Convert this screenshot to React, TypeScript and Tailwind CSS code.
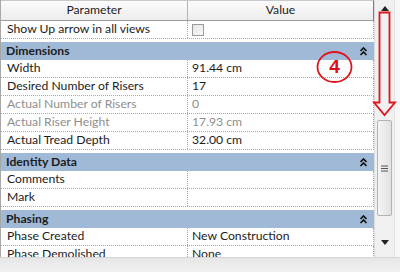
import React from "react";

type Row =
  | { kind: "row"; p: string; v?: string; dim?: boolean; check?: boolean }
  | { kind: "group"; label: string };

const rows: Row[] = [
  { kind: "row", p: "Show Up arrow in all views", check: true },
  { kind: "group", label: "Dimensions" },
  { kind: "row", p: "Width", v: "91.44 cm" },
  { kind: "row", p: "Desired Number of Risers", v: "17" },
  { kind: "row", p: "Actual Number of Risers", v: "0", dim: true },
  { kind: "row", p: "Actual Riser Height", v: "17.93 cm", dim: true },
  { kind: "row", p: "Actual Tread Depth", v: "32.00 cm" },
  { kind: "group", label: "Identity Data" },
  { kind: "row", p: "Comments", v: "" },
  { kind: "row", p: "Mark", v: "" },
  { kind: "group", label: "Phasing" },
  { kind: "row", p: "Phase Created", v: "New Construction" },
  { kind: "row", p: "Phase Demolished", v: "None" },
];

function Chevrons() {
  return (
    <svg width="9" height="9" viewBox="0 0 9 9" className="mr-[6px]">
      <path d="M1.5 4 L4.5 1 L7.5 4" fill="none" stroke="#111" strokeWidth="1.7" />
      <path d="M1.5 8 L4.5 5 L7.5 8" fill="none" stroke="#111" strokeWidth="1.7" />
    </svg>
  );
}

export default function App() {
  return (
    <div
      className="relative w-[400px] h-[272px] overflow-hidden bg-white text-[12.2px] text-[#1c1c1c]"
      style={{ fontFamily: 'Lato, "Noto Sans", sans-serif' }}
    >
      <div className="flex h-[257px]">
        <div className="w-[374px] h-full overflow-hidden border-l border-[#a8a8a8] flex flex-col">
          <div className="flex h-[21px] shrink-0 bg-gradient-to-b from-[#fbfbfb] to-[#ededed] border-b border-[#9c9c9c] border-r border-r-[#7a7a7a] border-t border-t-[#c8c8c8]">
            <div className="w-[187px] flex items-center justify-center border-r border-[#b4b4b4]">
              Parameter
            </div>
            <div className="flex-1 flex items-center justify-center">Value</div>
          </div>
          {rows.map((r, i) =>
            r.kind === "group" ? (
              <div
                key={i}
                className="mt-[3px] h-[18px] shrink-0 bg-[#9fb9d7] flex items-center justify-between pl-[5px] font-bold"
              >
                <span>{r.label}</span>
                <Chevrons />
              </div>
            ) : (
              <div
                key={i}
                className="h-[18px] shrink-0 flex border-b border-dotted border-[#a9a9a9] border-r"
              >
                <div
                  className={`w-[187px] pl-[6px] flex items-center border-r border-dotted border-[#a9a9a9] whitespace-nowrap ${
                    r.dim ? "text-[#8e8e8e]" : ""
                  }`}
                >
                  {r.p}
                </div>
                <div
                  className={`flex-1 pl-[4px] flex items-center whitespace-nowrap ${
                    r.dim ? "text-[#8e8e8e]" : ""
                  }`}
                >
                  {r.check ? (
                    <div className="w-[12px] h-[12px] border border-[#9a9a9a] bg-gradient-to-br from-[#e4e4e4] to-[#fafafa]" />
                  ) : (
                    r.v
                  )}
                </div>
              </div>
            )
          )}
        </div>
        <div className="w-[20px] h-full bg-[#f0f0f0] border-l border-[#dcdcdc] flex flex-col items-center">
          <svg width="8" height="5" viewBox="0 0 8 5" className="mt-[6px]">
            <path d="M0 5 L4 0 L8 5 Z" fill="#222" />
          </svg>
          <div className="mt-[109px] w-[15px] h-[96px] rounded-[2px] border border-[#b3b3b3] bg-gradient-to-r from-[#f4f4f4] to-[#e2e2e2] flex items-center justify-center">
            <svg width="7" height="7" viewBox="0 0 7 7">
              <path d="M0 1 H7 M0 3.5 H7 M0 6 H7" stroke="#555" strokeWidth="1" />
            </svg>
          </div>
          <svg width="8" height="5" viewBox="0 0 8 5" className="mt-[24px]">
            <path d="M0 0 L8 0 L4 5 Z" fill="#222" />
          </svg>
        </div>
        <div className="flex-1 bg-[#f7f7f7] border-l border-[#e2e2e2]" />
      </div>
      <div className="h-[15px] bg-gradient-to-b from-[#e6e6e6] to-[#f2f2f2] border-t border-[#d6d6d6]" />

      <svg
        className="absolute left-0 top-0 pointer-events-none"
        width="400"
        height="272"
        viewBox="0 0 400 272"
      >
        <ellipse cx="334.5" cy="67" rx="17" ry="15" fill="none" stroke="#e0141c" strokeWidth="1.8" />
        <path
          d="M379.5 12.5 H389.5 V102.5 H395 L384.5 115 L374 102.5 H379.5 Z"
          fill="none"
          stroke="#e0141c"
          strokeWidth="1.8"
          strokeLinejoin="miter"
        />
      </svg>
      <div
        className="absolute left-[317px] top-[52px] w-[35px] h-[30px] flex items-center justify-center text-[#d81018] text-[19px] font-semibold"
        style={{ fontFamily: '"Liberation Sans", Arial, sans-serif' }}
      >
        4
      </div>
    </div>
  );
}
